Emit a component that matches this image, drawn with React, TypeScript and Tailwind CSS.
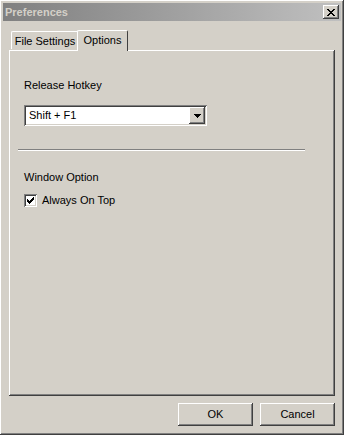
import React from "react";

const raised =
  "shadow-[inset_-1px_-1px_0_#404040,inset_1px_1px_0_#ffffff,inset_-2px_-2px_0_#808080,inset_2px_2px_0_#d4d0c8]";
const sunken =
  "shadow-[inset_1px_1px_0_#808080,inset_-1px_-1px_0_#ffffff,inset_2px_2px_0_#404040,inset_-2px_-2px_0_#d4d0c8]";

function CloseIcon() {
  return (
    <svg width="8" height="7" viewBox="0 0 8 7" shapeRendering="crispEdges">
      <path
        d="M0 0h2v1H0zM6 0h2v1H6zM1 1h2v1H1zM5 1h2v1H5zM2 2h4v1H2zM3 3h2v1H3zM2 4h4v1H2zM1 5h2v1H1zM5 5h2v1H5zM0 6h2v1H0zM6 6h2v1H6z"
        fill="#000"
      />
    </svg>
  );
}

function Check() {
  return (
    <svg width="7" height="7" viewBox="0 0 7 7" shapeRendering="crispEdges">
      <path
        d="M6 0h1v3H6zM5 1h1v3H5zM4 2h1v3H4zM3 3h1v3H3zM2 4h1v3H2zM1 3h1v3H1zM0 2h1v3H0z"
        fill="#000"
      />
    </svg>
  );
}

export default function App() {
  return (
    <div
      className={`w-[344px] h-[435px] bg-[#d4d0c8] flex flex-col p-[3px] ${raised} text-[11px] leading-[13px] text-black`}
      style={{ fontFamily: '"Liberation Sans", Arial, sans-serif' }}
    >
      {/* Title bar */}
      <div className="h-[18px] bg-gradient-to-r from-[#808080] to-[#c0c0c0] flex items-center pl-[2px] pr-[2px]">
        <span className="font-bold text-[#d4d0c8] flex-1">Preferences</span>
        <div className={`w-[16px] h-[14px] bg-[#d4d0c8] flex items-center justify-center ${raised}`}>
          <CloseIcon />
        </div>
      </div>

      {/* Tabs */}
      <div className="flex flex-col px-[6px] mt-[8px]">
        <div className="flex items-end pl-[2px] h-[21px] relative z-10">
          <div className="w-[68px] h-[18px] border-t border-l border-white border-r border-r-[#404040] rounded-tl-[2px] rounded-tr-[2px] flex items-center justify-center pt-[1px] mb-px">
            File Settings
          </div>
          <div className="w-[51px] h-[21px] -ml-[2px] bg-[#d4d0c8] border-t border-l border-white border-r border-r-[#404040] rounded-tl-[2px] rounded-tr-[2px] flex items-center justify-center pb-[2px] relative -mb-px">
            Options
          </div>
        </div>
        <div
          className={`h-[346px] shadow-[inset_-1px_-1px_0_#404040,inset_1px_1px_0_#ffffff,inset_-2px_-2px_0_#808080] flex flex-col pl-[15px] pt-[29px]`}
        >
          <div>Release Hotkey</div>
          <div className={`mt-[13px] w-[183px] h-[21px] bg-white ${sunken} flex items-center pl-[5px] pr-[2px]`}>
            <span className="flex-1">Shift + F1</span>
            <div className={`w-[16px] h-[17px] bg-[#d4d0c8] ${raised} flex items-center justify-center`}>
              <svg width="7" height="4" viewBox="0 0 7 4" shapeRendering="crispEdges">
                <path d="M0 0h7v1H0zM1 1h5v1H1zM2 2h3v1H2zM3 3h1v1H3z" fill="#000" />
              </svg>
            </div>
          </div>
          <div className="mt-[23px] -ml-[6px] w-[287px] h-[2px] border-t border-[#808080] border-b border-b-white" />
          <div className="mt-[20px]">Window Option</div>
          <div className="mt-[10px] flex items-center">
            <div className={`w-[13px] h-[13px] bg-white ${sunken} flex items-center justify-center`}>
              <Check />
            </div>
            <span className="ml-[5px]">Always On Top</span>
          </div>
        </div>
      </div>

      {/* Buttons */}
      <div className="flex justify-end gap-[7px] mt-[7px] pr-[6px]">
        <div className={`w-[75px] h-[23px] flex items-center justify-center ${raised}`}>OK</div>
        <div className={`w-[75px] h-[23px] flex items-center justify-center ${raised}`}>Cancel</div>
      </div>
    </div>
  );
}
